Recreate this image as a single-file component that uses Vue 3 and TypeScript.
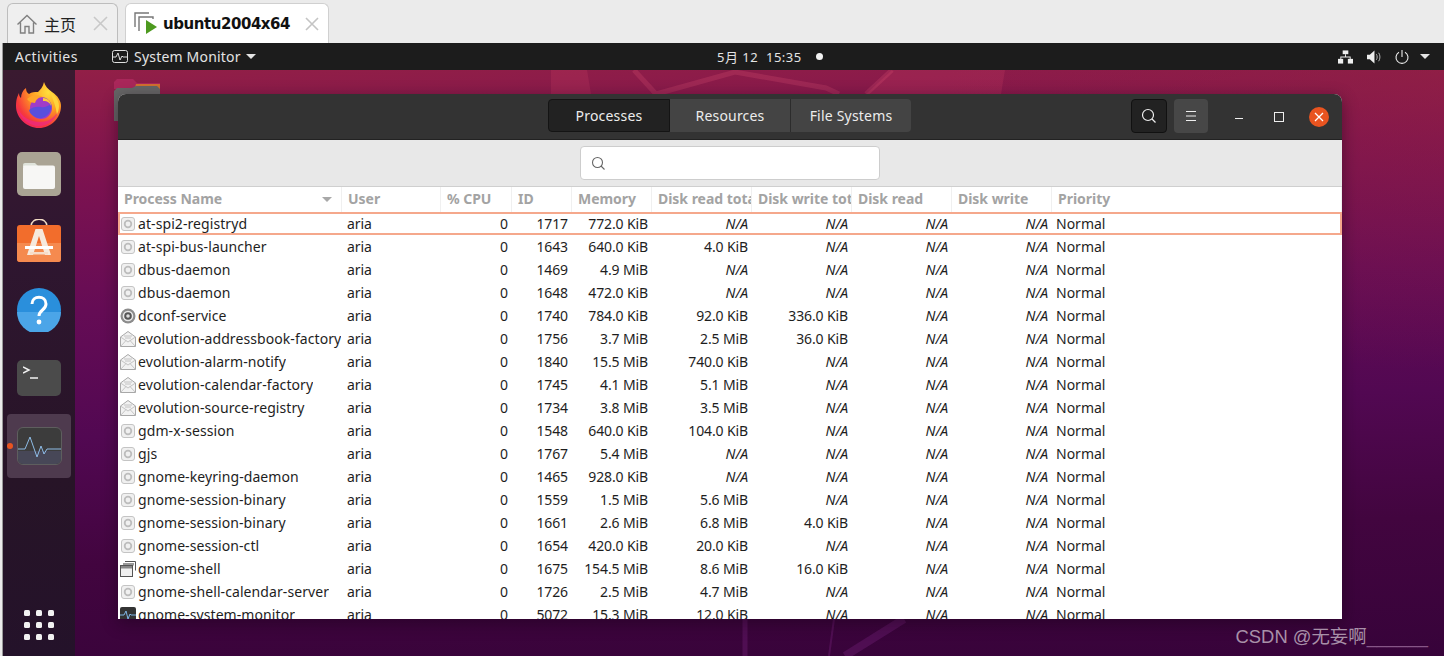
<script setup lang="ts">
type Kind = 'gear' | 'dconf' | 'mail' | 'win' | 'mon'
interface Row { name: string; id: string; mem: string; dr: string; dw: string; kind: Kind }

const rows: Row[] = [
  { name: 'at-spi2-registryd', id: '1717', mem: '772.0 KiB', dr: 'N/A', dw: 'N/A', kind: 'gear' },
  { name: 'at-spi-bus-launcher', id: '1643', mem: '640.0 KiB', dr: '4.0 KiB', dw: 'N/A', kind: 'gear' },
  { name: 'dbus-daemon', id: '1469', mem: '4.9 MiB', dr: 'N/A', dw: 'N/A', kind: 'gear' },
  { name: 'dbus-daemon', id: '1648', mem: '472.0 KiB', dr: 'N/A', dw: 'N/A', kind: 'gear' },
  { name: 'dconf-service', id: '1740', mem: '784.0 KiB', dr: '92.0 KiB', dw: '336.0 KiB', kind: 'dconf' },
  { name: 'evolution-addressbook-factory', id: '1756', mem: '3.7 MiB', dr: '2.5 MiB', dw: '36.0 KiB', kind: 'mail' },
  { name: 'evolution-alarm-notify', id: '1840', mem: '15.5 MiB', dr: '740.0 KiB', dw: 'N/A', kind: 'mail' },
  { name: 'evolution-calendar-factory', id: '1745', mem: '4.1 MiB', dr: '5.1 MiB', dw: 'N/A', kind: 'mail' },
  { name: 'evolution-source-registry', id: '1734', mem: '3.8 MiB', dr: '3.5 MiB', dw: 'N/A', kind: 'mail' },
  { name: 'gdm-x-session', id: '1548', mem: '640.0 KiB', dr: '104.0 KiB', dw: 'N/A', kind: 'gear' },
  { name: 'gjs', id: '1767', mem: '5.4 MiB', dr: 'N/A', dw: 'N/A', kind: 'gear' },
  { name: 'gnome-keyring-daemon', id: '1465', mem: '928.0 KiB', dr: 'N/A', dw: 'N/A', kind: 'gear' },
  { name: 'gnome-session-binary', id: '1559', mem: '1.5 MiB', dr: '5.6 MiB', dw: 'N/A', kind: 'gear' },
  { name: 'gnome-session-binary', id: '1661', mem: '2.6 MiB', dr: '6.8 MiB', dw: '4.0 KiB', kind: 'gear' },
  { name: 'gnome-session-ctl', id: '1654', mem: '420.0 KiB', dr: '20.0 KiB', dw: 'N/A', kind: 'gear' },
  { name: 'gnome-shell', id: '1675', mem: '154.5 MiB', dr: '8.6 MiB', dw: '16.0 KiB', kind: 'win' },
  { name: 'gnome-shell-calendar-server', id: '1726', mem: '2.5 MiB', dr: '4.7 MiB', dw: 'N/A', kind: 'gear' },
  { name: 'gnome-system-monitor', id: '5072', mem: '15.3 MiB', dr: '12.0 KiB', dw: 'N/A', kind: 'mon' },
]
const columns = ['User', '% CPU', 'ID', 'Memory', 'Disk read total', 'Disk write total', 'Disk read', 'Disk write', 'Priority']
const isNA = (v: string) => v === 'N/A'
</script>

<template>
  <div class="screen">
    <div class="tabbar">
      <div class="tab tab-home">
        <svg class="home-ico" width="22" height="22" viewBox="0 0 22 22" fill="none" stroke="#808080" stroke-width="1.4"><path d="M1.5 11.5 11 2.5l9.5 9M4.500 9.500V20h4.500v-6.500h4V20h4.500V9.500"/></svg>
        <span class="tab-cn">主页</span>
        <svg class="tab-x" width="15" height="15" viewBox="0 0 15 15" stroke="#c8c8c8" stroke-width="1.6"><path d="M1 1l13 13M14 1 1 14"/></svg>
      </div>
      <div class="tab tab-vm">
        <svg class="vm-ico" width="24" height="24" viewBox="0 0 24 24" fill="none"><path d="M1 16V2h14" stroke="#777" stroke-width="1.4"/><path d="M5 20V6h14v2" stroke="#777" stroke-width="1.4"/><path d="M12 9l11 7-11 7z" fill="#4d9a1f"/></svg>
        <span class="tab-title">ubuntu2004x64</span>
        <svg class="tab-x" width="14" height="14" viewBox="0 0 14 14" stroke="#c4c4c4" stroke-width="1.6"><path d="M1 1l12 12M13 1 1 13"/></svg>
      </div>
    </div>

    <div class="vm">
      <div class="topbar">
        <div class="top-left">
          <span class="activities">Activities</span>
          <svg class="sm-ico" width="16" height="14" viewBox="0 0 16 14" fill="none" stroke="#e0e0e0" stroke-width="1"><rect x=".5" y=".5" width="15" height="12" rx="2"/><path d="M1 7h3l2-4 2 7 2-4 1 1h4"/></svg>
          <span class="sm-name">System Monitor</span>
          <i class="caret"></i>
        </div>
        <div class="clock"><span>5月 12&nbsp;&nbsp;15:35</span><i class="clock-dot"></i></div>
        <div class="tray">
          <svg width="15" height="14" viewBox="0 0 16 14" fill="#eee"><rect x="5" y="0" width="6" height="4"/><rect x="0" y="9" width="5.500" height="5"/><rect x="10.500" y="9" width="5.500" height="5"/><path d="M7.500 4h1v2.500h5V9h-1V7.500h-9V9h-1V6.500h5z"/></svg>
          <svg width="14" height="14" viewBox="0 0 15 14" fill="#eee"><path d="M0 4.500h3L8 0v14L3 9.500H0z"/><path d="M10 4c1.200 1.600 1.200 4.400 0 6M12.500 2.500c1.800 2.500 1.800 6.500 0 9" fill="none" stroke="#bbb"/></svg>
          <svg width="14" height="14" viewBox="0 0 14 14" fill="none" stroke="#eee" stroke-width="1.100"><path d="M4 2.200a6 6 0 1 0 6 0M7 0v7"/></svg>
          <i class="caret tray-caret"></i>
        </div>
      </div>

      <div class="desk">
        <nav class="dock">
          <div class="dock-item">
            <svg class="ff" width="46" height="46" viewBox="0 0 46 46">
              <defs>
                <radialGradient id="ffa" cx=".72" cy=".22" r="1"><stop offset="0" stop-color="#ffe03d"/><stop offset=".4" stop-color="#ff9a22"/><stop offset=".72" stop-color="#f6393c"/><stop offset="1" stop-color="#e6127c"/></radialGradient>
              </defs>
              <path d="M28 0c1 4 4 7 8 10 6 4 9 9 9 14 0 12-10 22-22 22S0 36 0 24c0-6 1-9 3-13 0 3 1 4 2 5 0-4 2-8 5-10 0 3 1 5 3 6 3-2 5-2 9-2 2-2 5-5 6-10z" fill="url(#ffa)"/>
              <path d="M33 9c6 4 10 9 10 15 0 3-1 6-2 9-1-8-4-17-8-24z" fill="#ffd43c"/>
              <circle cx="25" cy="26" r="11" fill="#a03cc8"/>
              <path d="M13 28c3-3 8-4 12-3 3 1 7-1 10-3 1 6-2 12-9 14-6 1-12-3-13-8z" fill="#5a4fdc"/>
              <path d="M11 17c4-4 11-5 16-2-5 0-7 3-8 6-2 0-6-1-8-4z" fill="#ffa62a"/>
              <path d="M27 16c5 0 8 4 8 8-1-3-3-5-8-5z" fill="#ffcb3a"/>
              <path d="M2 27c2 9 11 17 21 17 9 0 16-6 19-14-4 6-10 10-18 10C14 40 6 35 2 27z" fill="#ee2a80" opacity=".75"/>
            </svg>
          </div>
          <div class="dock-item">
            <div class="ico-files"><svg width="32" height="27" viewBox="0 0 32 27"><path d="M0 3a2 2 0 0 1 2-2h10l4 4H0z" fill="#dfe3da"/><rect y="3.500" width="32" height="23.500" rx="2" fill="#f7f7f5"/></svg></div>
          </div>
          <div class="dock-item">
            <svg class="bag" width="44" height="44" viewBox="0 0 44 44">
              <path d="M14 7c1-9 15-9 16 0" fill="none" stroke="#f2dcc4" stroke-width="1.600"/>
              <rect y="6" width="44" height="37" rx="3" fill="#f26d2c"/>
              <path d="M0 24h44v16a3 3 0 0 1-3 3H3a3 3 0 0 1-3-3z" fill="#f58a4f"/>
              <path d="M18.500 10h7L34 36h-6l-6-19-6 19h-6z" fill="#f6e9dc"/>
              <rect x="8" y="27" width="28" height="3" fill="#fff"/>
              <rect x="13" y="33" width="18" height="2.500" fill="#f6dcc8"/>
            </svg>
          </div>
          <div class="dock-item">
            <svg width="44" height="44" viewBox="0 0 44 44">
              <circle cx="22" cy="22" r="22" fill="#2a8fdc"/>
              <path d="M0 24h44a22 22 0 0 1-44 0z" fill="#4ba5e8"/>
              <path d="M15 16c0-9 14-9 14 0 0 6-7 6-7 12" fill="none" stroke="#fff" stroke-width="3"/>
              <circle cx="22" cy="34" r="2.400" fill="#fff"/>
            </svg>
          </div>
          <div class="dock-item">
            <div class="ico-term"><svg width="18" height="14" viewBox="0 0 18 14" fill="none" stroke="#f2f2f2" stroke-width="1.500"><path d="M0 1l6 3-6 3M7 12h8"/></svg></div>
          </div>
          <div class="dock-item active">
            <i class="run-dot"></i>
            <div class="ico-mon">
              <div class="mon-low"></div>
              <svg class="mon-line" width="44" height="26" viewBox="0 0 44 26" fill="none" stroke="#8ebce6" stroke-width="1"><path d="M0 17h7l5-12 7 20 4-11 3 8 3-5h15"/></svg>
            </div>
          </div>
          <div class="apps">
            <i v-for="n in 9" :key="n"></i>
          </div>
        </nav>

        <main class="canvas">
          <svg class="wall" viewBox="0 0 1369 586" fill="none">
            <path d="M476 0h36l4 24h-40zM817 0h113l-4 24H791z" fill="#ff5a78" fill-opacity=".13"/>
            <path d="M559 0l22 24M581 24 660 2l91 16 13 6M817 0l-26 24" stroke="#ff6a86" stroke-opacity=".17" stroke-width="5"/>
            <path d="M670 549v37" stroke="#8a2a90" stroke-opacity=".28" stroke-width="5"/>
            <path d="M759 549l-5 37" stroke="#8a2a90" stroke-opacity=".28" stroke-width="2"/>
            <path d="M829 549l-59 37" stroke="#8a2a90" stroke-opacity=".28" stroke-width="8"/>
          </svg>

          <svg class="desk-folder" width="46" height="42" viewBox="0 0 46 42">
            <path d="M0 3l3-3h16l4 4h23v6H0z" fill="#a9275a"/>
            <path d="M22 5h24v7H20z" fill="#d0702f"/>
            <path d="M0 12l3-3h15l4-2h21l3 3v32H0z" fill="#666"/>
          </svg>

          <section class="window">
            <header class="head">
              <div class="seg">
                <button class="seg-btn on">Processes</button>
                <button class="seg-btn">Resources</button>
                <button class="seg-btn">File Systems</button>
              </div>
              <button class="hbtn hbtn-search">
                <svg width="16" height="16" viewBox="0 0 16 16" fill="none" stroke="#eee" stroke-width="1.200"><circle cx="7" cy="7" r="5.500"/><path d="M11 11l3.500 3.500"/></svg>
              </button>
              <button class="hbtn hbtn-menu">
                <svg width="12" height="10" viewBox="0 0 12 10" stroke="#eee" stroke-width="1"><path d="M1 .5h10M1 5h10M1 9.500h10"/></svg>
              </button>
              <div class="winctl">
                <i class="w-min"></i>
                <i class="w-max"></i>
                <span class="w-close"><svg width="10" height="10" viewBox="0 0 10 10" stroke="#fff" stroke-width="1.300"><path d="M1 1l8 8M9 1 1 9"/></svg></span>
              </div>
            </header>

            <div class="searchbar">
              <div class="entry">
                <svg width="15" height="15" viewBox="0 0 15 15" fill="none" stroke="#666" stroke-width="1.100"><circle cx="6.500" cy="6.500" r="5"/><path d="M10 10l3.500 3.500"/></svg>
              </div>
            </div>

            <div class="table">
              <div class="tr th">
                <div class="c first">Process Name<i class="sort"></i></div>
                <div v-for="c in columns" :key="c" class="c">{{ c }}</div>
              </div>
              <div v-for="(r, i) in rows" :key="r.id" class="tr td" :class="{ sel: i === 0 }">
                <div class="c first">
                  <svg class="proc" width="16" height="16" viewBox="0 0 16 16">
                    <template v-if="r.kind === 'gear'">
                      <rect x="1.500" y="1.500" width="13" height="13" rx="2.500" fill="#f0f0f0" stroke="#c4c4c4"/>
                      <circle cx="8" cy="8" r="3.300" fill="none" stroke="#bdbdbd" stroke-width="1.800"/>
                    </template>
                    <template v-else-if="r.kind === 'dconf'">
                      <circle cx="8" cy="8" r="7.500" fill="#8c8c8c"/>
                      <circle cx="8" cy="8" r="5.300" fill="#e8e8e8"/>
                      <circle cx="8" cy="8" r="3.800" fill="#555"/>
                      <circle cx="8" cy="8" r="1.800" fill="#ddd"/>
                    </template>
                    <template v-else-if="r.kind === 'mail'">
                      <path d="M.5 6 8 .5 15.500 6v9.500H.5z" fill="#f2f2f2" stroke="#a8a8a8"/>
                      <path d="M.5 6 8 11l7.500-5M.5 15.500 6 9.500M15.500 15.500 10 9.500M4 5h8M5 7h6" fill="none" stroke="#b8b8b8" stroke-width=".8"/>
                    </template>
                    <template v-else-if="r.kind === 'win'">
                      <path d="M5 .5h10.500v9" fill="none" stroke="#555"/>
                      <rect x="3" y="2" width="11" height="2.500" fill="#999"/>
                      <rect x=".5" y="4.500" width="12" height="11" fill="#f0f0f0" stroke="#555"/>
                      <rect x="1" y="5" width="11" height="2.500" fill="#888"/>
                    </template>
                    <template v-else>
                      <rect width="16" height="16" rx="2" fill="#333"/>
                      <path d="M0 8h4l2-4 2 8 2-5 1 1h5" fill="none" stroke="#7fb6e6"/>
                    </template>
                  </svg>
                  <span class="pname">{{ r.name }}</span>
                </div>
                <div class="c">aria</div>
                <div class="c num">0</div>
                <div class="c num">{{ r.id }}</div>
                <div class="c num">{{ r.mem }}</div>
                <div class="c num" :class="{ na: isNA(r.dr) }">{{ r.dr }}</div>
                <div class="c num" :class="{ na: isNA(r.dw) }">{{ r.dw }}</div>
                <div class="c num na">N/A</div>
                <div class="c num na">N/A</div>
                <div class="c prio">Normal</div>
              </div>
            </div>
          </section>

          <div class="mark">CSDN @无妄啊<span class="mark-line">______</span></div>
        </main>
      </div>
    </div>
  </div>
</template>

<style>
html, body { margin: 0; overflow: hidden; background: #ececec; }
</style>

<style scoped>
.screen {
  width: 1444px;
  height: 656px;
  overflow: hidden;
  display: flex;
  flex-direction: column;
  background: #ebebeb;
  font-family: "Noto Sans", "Noto Sans CJK SC", sans-serif;
}
.tabbar {
  height: 43px;
  flex: none;
  box-sizing: border-box;
  padding: 3px 0 0 7px;
  display: flex;
  gap: 7px;
}
.tab {
  box-sizing: border-box;
  height: 40px;
  display: flex;
  align-items: center;
  border: 1px solid #bdbdbd;
  border-bottom: 0;
  border-radius: 6px 6px 0 0;
}
.tab-home { width: 111px; background: #efefef; padding-left: 8px; }
.tab-vm { width: 204px; background: #fff; padding-left: 8px; border-color: #d0d0d0; }
.home-ico { flex: none; }
.tab-cn { margin-left: 6px; font-size: 16px; color: #222; }
.tab-home .tab-x { margin-left: 17px; }
.vm-ico { flex: none; margin-top: -1px; }
.tab-title {
  margin-left: 5px;
  font-family: "DejaVu Sans", sans-serif;
  font-weight: 700;
  font-size: 15px;
  letter-spacing: -.45px;
  color: #111;
}
.tab-vm .tab-x { margin-left: 15px; }

.vm {
  flex: 1;
  min-height: 0;
  margin-left: 2px;
  border-left: 1px solid #9a9a9a;
  display: flex;
  flex-direction: column;
}
.topbar {
  height: 27px;
  flex: none;
  background: #1c1c1c;
  color: #e4e4e4;
  font-size: 14px;
  display: flex;
  align-items: center;
}
.top-left { width: 714px; flex: none; display: flex; align-items: center; padding-left: 12px; box-sizing: border-box; }
.activities { width: 97px; letter-spacing: .45px; }
.sm-ico { margin-right: 6px; }
.sm-name { letter-spacing: .2px; }
.caret {
  display: inline-block;
  width: 0; height: 0;
  margin-left: 5px;
  border: 5px solid transparent;
  border-top: 5px solid #e4e4e4;
  border-bottom: 0;
}
.clock { display: flex; align-items: center; font-size: 13px; letter-spacing: .5px; }
.clock-dot { width: 7px; height: 7px; border-radius: 50%; background: #f2f2f2; margin-left: 14px; margin-top: -1px; }
.tray { margin-left: auto; display: flex; align-items: center; gap: 14px; padding-right: 14px; }
.tray-caret { margin-left: -3px; }

.desk { flex: 1; min-height: 0; display: flex; }
.dock {
  width: 72px;
  flex: none;
  background: linear-gradient(#3a1a30, #2f1630 30%, #271427 70%, #24122a);
  display: flex;
  flex-direction: column;
  align-items: center;
  padding-top: 2px;
  box-sizing: border-box;
}
.dock-item { height: 68px; width: 64px; flex: none; display: flex; align-items: center; justify-content: center; position: relative; }
.dock-item.active { height: 64px; margin: 2px 0; background: #4e3a4e; border-radius: 4px; }
.ff { margin-top: -2px; }
.bag { margin-top: -3px; }
.ico-files {
  width: 44px; height: 44px; border-radius: 5px; background: #aaa494;
  display: flex; align-items: center; justify-content: center;
  box-sizing: border-box; padding-top: 2px;
}
.ico-term {
  width: 44px; height: 36px; border-radius: 5px; background: #4b4b4b;
  box-sizing: border-box; padding: 6px 0 0 6px;
}
.ico-term svg { display: block; }
.ico-mon {
  width: 45px; height: 38px; border-radius: 6px; background: #3c3c3c; border: 1px solid #5e5e5e;
  box-sizing: border-box; position: relative; overflow: hidden;
}
.mon-low { position: absolute; left: 0; right: 0; bottom: 0; height: 13px; background: #474757; }
.mon-line { position: absolute; left: 0; top: 4px; }
.run-dot { position: absolute; left: 0; top: 50%; margin-top: -3px; width: 6px; height: 6px; border-radius: 50%; background: #e95420; }
.apps {
  margin-top: auto;
  margin-bottom: 16px;
  display: grid;
  grid-template-columns: repeat(3, 6px);
  grid-auto-rows: 6px;
  gap: 6px;
}
.apps i { background: #f2f2f2; border-radius: 1.5px; }

.canvas {
  flex: 1;
  min-width: 0;
  position: relative;
  padding: 24px 0 0 43px;
  box-sizing: border-box;
  background:
    radial-gradient(ellipse 500px 300px at 100% 0%, rgba(150, 35, 65, .5), transparent),
    linear-gradient(178deg, #921f47 0%, #7c1250 18%, #650c55 38%, #520852 58%, #42053f 78%, #37033a 100%);
}
.wall { position: absolute; left: 0; top: 0; width: 1369px; height: 586px; }
.desk-folder { position: absolute; left: 39px; top: 9px; }
.window {
  position: relative;
  width: 1224px;
  height: 525px;
  border-radius: 8px 8px 0 0;
  overflow: hidden;
  background: #fff;
  display: flex;
  flex-direction: column;
  box-shadow: 0 4px 16px rgba(20, 0, 20, .45);
}
.head {
  height: 46px;
  flex: none;
  box-sizing: border-box;
  background: #333333;
  border-bottom: 1px solid #222;
  display: flex;
  align-items: center;
  padding: 0 13px 0 430px;
  color: #eee;
}
.seg { display: flex; height: 33px; margin-top: -2px; }
.seg-btn {
  width: 121px;
  height: 33px;
  margin: 0;
  padding: 0;
  box-sizing: border-box;
  border: 0;
  border-right: 1px solid #2c2c2c;
  background: #444;
  color: #ececec;
  font: 14px "Noto Sans", sans-serif;
  letter-spacing: .2px;
}
.seg-btn:last-child { border-right: 0; border-radius: 0 4px 4px 0; width: 120px; }
.seg-btn.on { background: #222; border: 1px solid #141414; border-radius: 4px 0 0 4px; width: 122px; }
.hbtn {
  height: 34px;
  margin: -1px 0 0;
  padding: 0;
  box-sizing: border-box;
  border-radius: 4px;
  display: flex;
  align-items: center;
  justify-content: center;
}
.hbtn-search { width: 36px; margin-left: 220px; background: #222; border: 1px solid #111; }
.hbtn-menu { width: 34px; margin-left: 7px; background: #474747; border: 0; }
.winctl { margin-left: auto; display: flex; align-items: center; }
.w-min { width: 8px; height: 1px; background: #eee; margin-top: 4px; }
.w-max { width: 8px; height: 8px; border: 1px solid #eee; box-sizing: content-box; margin-left: 31px; }
.w-close {
  width: 20px; height: 20px; border-radius: 50%; background: #e95420;
  margin-left: 25px; display: flex; align-items: center; justify-content: center;
}
.searchbar {
  height: 47px;
  flex: none;
  box-sizing: border-box;
  background: #e8e8e8;
  border-bottom: 1px solid #cfcfcf;
  padding: 6px 0 0 462px;
}
.entry {
  width: 300px;
  height: 34px;
  box-sizing: border-box;
  background: #fff;
  border: 1px solid #cdcdcd;
  border-radius: 4px;
  display: flex;
  align-items: center;
  padding-left: 10px;
}
.table { flex: 1; min-height: 0; overflow: hidden; }
.tr {
  display: grid;
  grid-template-columns: 224px 99px 71px 60px 80px 100px 100px 100px 100px 1fr;
}
.th { height: 25px; align-items: stretch; }
.th .c {
  padding: 0 0 0 6px;
  font-weight: 700;
  font-size: 14px;
  letter-spacing: -.03px;
  color: #a3a3a3;
  line-height: 24px;
  border-right: 1px solid #f0f0f0;
  overflow: hidden;
  white-space: nowrap;
  position: relative;
  box-sizing: border-box;
}
.sort {
  position: absolute;
  right: 9px; top: 10px;
  width: 0; height: 0;
  border: 5px solid transparent;
  border-top: 5px solid #a8a8a8;
  border-bottom: 0;
}
.td {
  height: 23px;
  box-sizing: border-box;
  align-items: center;
  font-size: 14px;
  letter-spacing: -.12px;
  color: #1e1e1e;
  position: relative;
}
.td .c { padding-left: 5px; white-space: nowrap; overflow: hidden; box-sizing: border-box; line-height: 23px; }
.td .first { display: flex; align-items: center; padding-left: 2px; }
.proc { flex: none; margin-right: 2px; }
.pname { overflow: hidden; letter-spacing: .08px; }
.td .num { text-align: right; padding: 0 4px 0 0; }
.td .na { font-style: italic; }
.td .prio { padding-left: 4px; letter-spacing: 0; }
.sel { box-shadow: inset 0 0 0 2px #f5a88c; }
.mark {
  position: absolute;
  right: 16px;
  top: 552px;
  font-family: "Liberation Sans", "Noto Sans CJK SC", sans-serif;
  font-size: 18.4px;
  color: #b5a0b5;
  opacity: .9;
}
.mark-line { color: #8f5f90; }
</style>
